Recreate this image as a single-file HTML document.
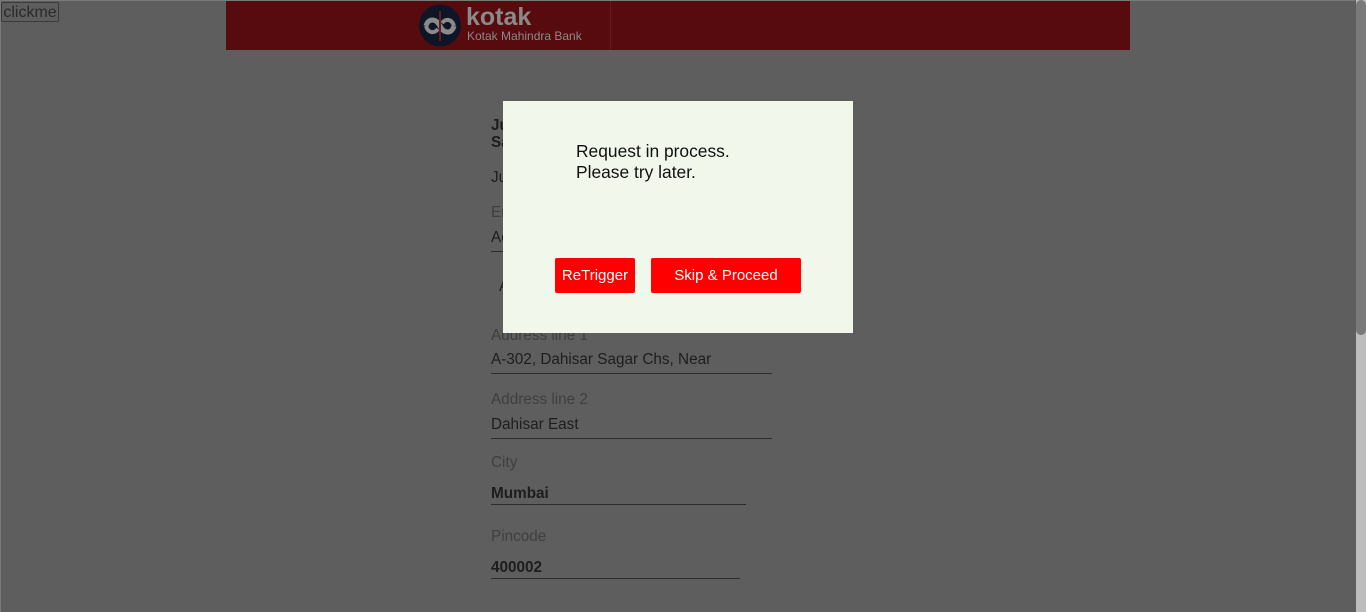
<!DOCTYPE html>
<html><head><style>
html,body{margin:0;padding:0;overflow:hidden;height:612px;}
body{width:1366px;height:612px;overflow:hidden;background:#5e5e5e;position:relative;font-family:"Liberation Sans",Arial,sans-serif;}
.border{position:absolute;left:0;top:0;width:1355px;height:612px;border-left:1px solid #7a7a7a;border-top:1px solid #7a7a7a;box-sizing:border-box;}
.btnc{position:absolute;left:1px;top:2px;width:58px;height:20px;border:1px solid #3a3a3a;border-radius:2px;background:#5e5e5e;color:#2a2a2a;font-size:16px;line-height:20px;text-align:center;box-sizing:border-box;}
.hdr{position:absolute;left:226px;top:1px;width:904px;height:49px;background:#570b0e;}
.hdr .sep{position:absolute;left:384px;top:0;width:1px;height:49px;background:#6a1a1c;}
.t{position:absolute;color:#1d1d1d;font-size:15.3px;}
.lbl{position:absolute;color:#3f3f3f;font-size:15.3px;}
.line{position:absolute;height:1px;background:#2b2b2b;}
.modal{position:absolute;left:503px;top:101px;width:350px;height:232px;background:#f1f7ea;}
.msg{position:absolute;left:73px;top:40px;font-size:17.4px;line-height:21px;color:#111;}
.b{position:absolute;top:157px;height:35px;background:#ff0000;color:#fff;font-size:15px;line-height:35px;text-align:center;border-radius:2px;}
.sb{position:absolute;left:1356px;top:0;width:10px;height:612px;background:#bdbdbd;}
.sb div{position:absolute;left:0;top:0;width:10px;height:335px;background:#7a7a7a;border-radius:5px;}
</style></head><body>
<div class="border"></div>
<div class="btnc">clickme</div>
<div class="hdr">
 <svg style="position:absolute;left:190px;top:3px" width="48" height="43" viewBox="0 0 48 43">
  <circle cx="24" cy="21.5" r="21" fill="#0d1526"/>
  <path d="M10 22c2-8 10-8 14 0s12 8 14 0" stroke="#8a8a8a" stroke-width="5" fill="none"/>
  <path d="M10 22c2 7 8 8 12 3M38 22c-2-7-8-8-12-3" stroke="#8a8a8a" stroke-width="4" fill="none"/>
  <rect x="23" y="7" width="2" height="30" fill="#6a1a1c"/>
 </svg>
 <div style="position:absolute;left:240px;top:3px;color:#8a8a8a;font-weight:bold;font-size:25px;line-height:26px;">kotak</div>
 <div style="position:absolute;left:241px;top:28px;color:#8a8a8a;font-size:12px;">Kotak Mahindra Bank</div>
 <div class="sep"></div>
</div>
<div class="t" style="left:491px;top:117px;font-weight:bold;line-height:17px;">Ju<br>Sa</div>
<div class="t" style="left:491px;top:169px;">Ju</div>
<div class="lbl" style="left:491px;top:204px;">En</div>
<div class="t" style="left:491px;top:229px;">Ac</div>
<div class="line" style="left:491px;top:251px;width:20px;"></div>
<div class="t" style="left:499px;top:278px;">A</div>
<div class="lbl" style="left:491px;top:327px;">Address line 1</div>
<div class="t" style="left:491px;top:351px;">A-302, Dahisar Sagar Chs, Near</div>
<div class="line" style="left:491px;top:373px;width:281px;"></div>
<div class="lbl" style="left:491px;top:391px;">Address line 2</div>
<div class="t" style="left:491px;top:416px;">Dahisar East</div>
<div class="line" style="left:491px;top:438px;width:281px;"></div>
<div class="lbl" style="left:491px;top:454px;">City</div>
<div class="t" style="left:491px;top:485px;font-weight:bold;">Mumbai</div>
<div class="line" style="left:491px;top:504px;width:255px;"></div>
<div class="lbl" style="left:491px;top:528px;">Pincode</div>
<div class="t" style="left:491px;top:559px;font-weight:bold;">400002</div>
<div class="line" style="left:491px;top:578px;width:249px;"></div>
<div class="modal">
 <div class="msg">Request in process.<br>Please try later.</div>
 <div class="b" style="left:52px;width:80px;">ReTrigger</div>
 <div class="b" style="left:148px;width:150px;">Skip &amp; Proceed</div>
</div>
<div class="sb"><div></div></div>
</body></html>
